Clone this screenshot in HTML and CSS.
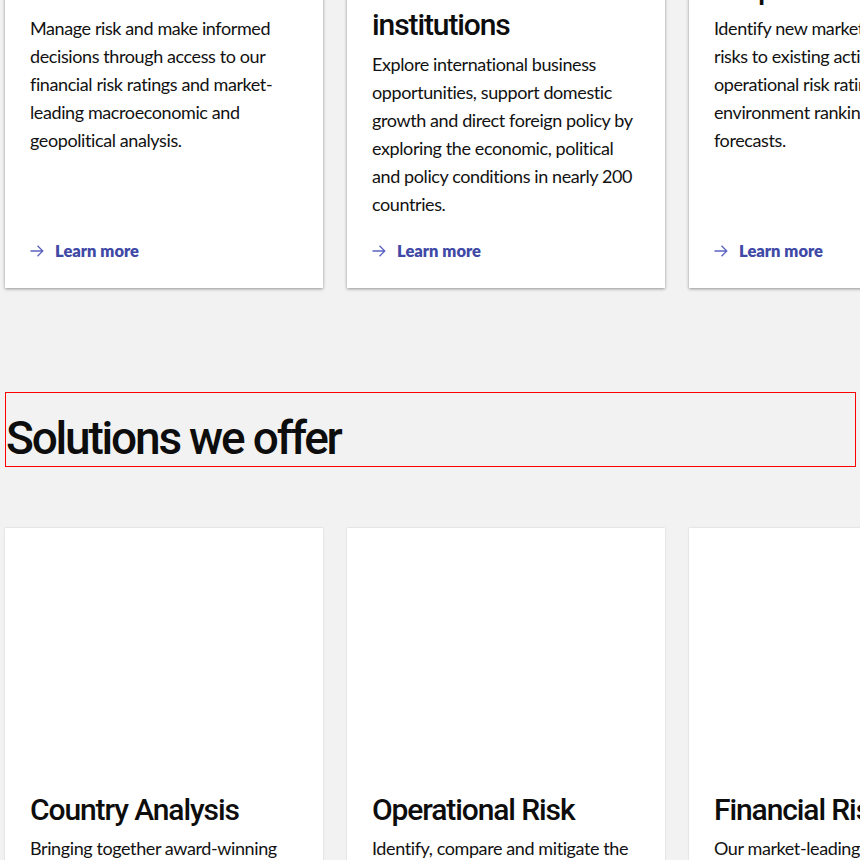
FILE: index.html
```html
<!DOCTYPE html>
<html lang="en">
<head>
<meta charset="utf-8">
<title>Solutions we offer</title>
<link rel="stylesheet" href="styles.css">
</head>
<body>
<div class="page">
  <div class="row row-top">
    <article class="card">
      <h3 class="card-title">Financial services</h3>
      <p class="card-text">Manage risk and make informed decisions through access to our financial risk ratings and market-leading macroeconomic and geopolitical analysis.</p>
      <a class="learn" href="#"><svg class="arrow" width="14" height="12" viewBox="0 0 14 12"><path d="M0.5 6H13M7.5 0.8L12.8 6L7.5 11.2" fill="none" stroke="currentColor" stroke-width="1.3"/></svg><span>Learn more</span></a>
    </article>
    <article class="card">
      <h3 class="card-title">Governments and institutions</h3>
      <p class="card-text">Explore international business opportunities, support domestic growth and direct foreign policy by exploring the economic, political and policy conditions in nearly 200 countries.</p>
      <a class="learn" href="#"><svg class="arrow" width="14" height="12" viewBox="0 0 14 12"><path d="M0.5 6H13M7.5 0.8L12.8 6L7.5 11.2" fill="none" stroke="currentColor" stroke-width="1.3"/></svg><span>Learn more</span></a>
    </article>
    <article class="card">
      <h3 class="card-title">Corporates</h3>
      <p class="card-text">Identify new markets and assess risks to existing activities with our operational risk ratings, business environment rankings and forecasts.</p>
      <a class="learn" href="#"><svg class="arrow" width="14" height="12" viewBox="0 0 14 12"><path d="M0.5 6H13M7.5 0.8L12.8 6L7.5 11.2" fill="none" stroke="currentColor" stroke-width="1.3"/></svg><span>Learn more</span></a>
    </article>
  </div>

  <h2 class="section-title">Solutions we offer</h2>

  <div class="row row-bottom">
    <article class="card card-media">
      <div class="media"></div>
      <h3 class="card-title">Country Analysis</h3>
      <p class="card-text">Bringing together award-winning forecasts and analysis for nearly 200 countries.</p>
    </article>
    <article class="card card-media">
      <div class="media"></div>
      <h3 class="card-title">Operational Risk</h3>
      <p class="card-text">Identify, compare and mitigate the risks of doing business across markets.</p>
    </article>
    <article class="card card-media">
      <div class="media"></div>
      <h3 class="card-title">Financial Risk</h3>
      <p class="card-text">Our market-leading sovereign, currency and banking sector risk ratings.</p>
    </article>
  </div>
</div>
</body>
</html>
```

FILE: styles.css
```css
html, body {
  margin: 0;
  padding: 0;
  overflow: hidden;
  background: #f2f2f2;
}

body {
  font-family: "Lato", "Open Sans", sans-serif;
  color: #121212;
}

.page {
  padding-left: 5px;
  width: 1200px;
}

.row {
  display: flex;
  gap: 24px;
  align-items: stretch;
}

.row-top {
  margin-top: -69px;
}

.card {
  flex: none;
  width: 318px;
  box-sizing: border-box;
  background: #fff;
  padding: 40px 25px 27px;
  display: flex;
  flex-direction: column;
  box-shadow: 0 1px 3px rgba(0, 0, 0, 0.4);
}

.card-title {
  margin: 0 0 7px;
  font-family: "Roboto", "Liberation Sans", sans-serif;
  font-weight: 500;
  font-size: 30px;
  line-height: 36px;
  letter-spacing: -1.1px;
  color: #0d0d0d;
}

.card-text {
  margin: 0;
  font-size: 18px;
  line-height: 28px;
  font-weight: 400;
  letter-spacing: -0.4px;
}

.learn {
  margin-top: auto;
  padding-top: 23px;
  display: flex;
  align-items: center;
  gap: 11px;
  text-decoration: none;
  color: #4049a6;
  font-weight: 800;
  font-size: 16.5px;
  line-height: 20px;
}

.arrow {
  color: #5b63c2;
  flex: none;
}

.section-title {
  margin: 104px 0 61px;
  width: 849px;
  border: 1px solid #ff0000;
  padding: 19px 0 2px;
  font-family: "Roboto", "Liberation Sans", sans-serif;
  font-weight: 500;
  font-size: 46px;
  line-height: 52px;
  letter-spacing: -2.2px;
  color: #0d0d0d;
}

.card-media {
  padding: 0 25px 40px;
  box-shadow: 0 0 2px rgba(0, 0, 0, 0.15);
}

.media {
  height: 264px;
}

.card-media .card-title {
  margin-bottom: 6px;
}
```
